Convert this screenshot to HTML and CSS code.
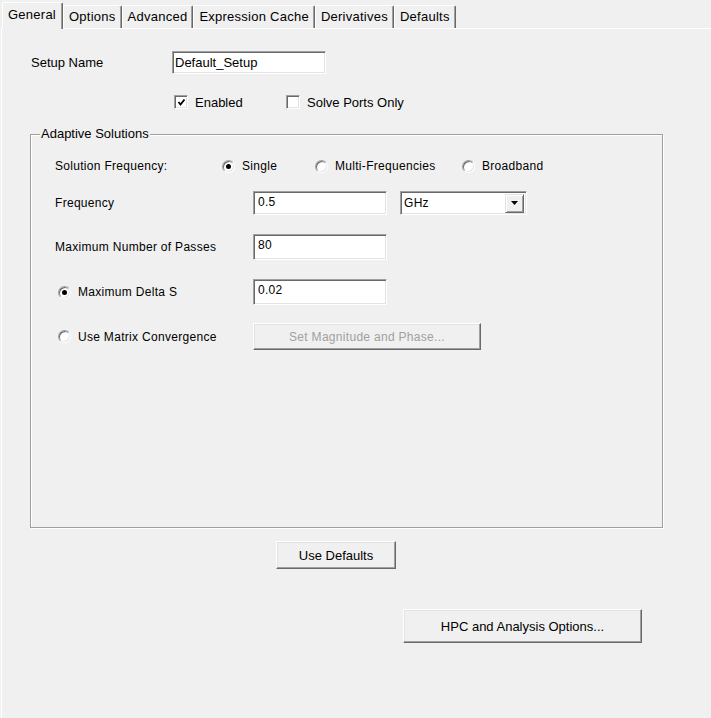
FILE: index.html
```html
<!DOCTYPE html>
<html lang="en">
<head>
    <meta charset="UTF-8">
    <title>Setup</title>
    <link rel="stylesheet" href="styles.css">
</head>
<body>
<div class="dialog">
    <div class="tabs">
        <div class="tab active">General</div>
        <div class="tab">Options</div>
        <div class="tab">Advanced</div>
        <div class="tab">Expression Cache</div>
        <div class="tab">Derivatives</div>
        <div class="tab">Defaults</div>
    </div>

    <div class="panel">
        <div class="setup-row">
            <span class="setup-label">Setup Name</span>
            <div class="field setup-field">Default_Setup</div>
        </div>

        <div class="check-row">
            <label class="check-item enabled-item">
                <span class="checkbox checked">
                    <svg width="9" height="9" viewBox="0 0 9 9"><polyline points="1.5,4 3.5,6.5 7.5,1.5" fill="none" stroke="#000" stroke-width="1.8"/></svg>
                </span>
                Enabled
            </label>
            <label class="check-item">
                <span class="checkbox"></span>
                Solve Ports Only
            </label>
        </div>

        <fieldset class="group">
            <legend>Adaptive Solutions</legend>
            <div class="group-body">
                <div class="opt-row">
                    <span class="opt-label freq-label">Solution Frequency:</span>
                    <label class="radio-item single"><span class="radio on"></span>Single</label>
                    <label class="radio-item multi"><span class="radio"></span>Multi-Frequencies</label>
                    <label class="radio-item"><span class="radio"></span>Broadband</label>
                </div>

                <div class="opt-row freq">
                    <span class="opt-label">Frequency</span>
                    <div class="field small-field">0.5</div>
                    <div class="combo">
                        <span class="combo-text">GHz</span>
                        <span class="combo-btn">
                            <svg width="7" height="4" viewBox="0 0 7 4"><polygon points="0,0 7,0 3.5,4" fill="#000"/></svg>
                        </span>
                    </div>
                </div>

                <div class="opt-row tall">
                    <span class="opt-label">Maximum Number of Passes</span>
                    <div class="field small-field">80</div>
                </div>

                <div class="opt-row tall">
                    <label class="opt-label radio-label"><span class="radio on"></span>Maximum Delta S</label>
                    <div class="field small-field">0.02</div>
                </div>

                <div class="opt-row tall last">
                    <label class="opt-label radio-label"><span class="radio"></span>Use Matrix Convergence</label>
                    <button class="button magnitude-button" disabled>Set Magnitude and Phase...</button>
                </div>
            </div>
        </fieldset>

        <div class="defaults-row">
            <button class="button defaults-button">Use Defaults</button>
        </div>

        <div class="hpc-row">
            <button class="button hpc-button">HPC and Analysis Options...</button>
        </div>
    </div>
</div>
</body>
</html>
```

FILE: styles.css
```css
html, body {
    width: 100%;
    height: 100%;
    padding: 0;
    margin: 0;
    overflow: hidden;
    background: #f0f0f0;
    font-family: "Liberation Sans", Arial, sans-serif;
    font-size: 13px;
    color: #000;
}

.dialog {
    height: 100%;
}

/* tab strip */
.tabs {
    display: flex;
    align-items: flex-end;
    height: 28px;
    padding-left: 2px;
}

.tab {
    box-sizing: border-box;
    height: 23px;
    line-height: 22px;
    padding: 0 5px 0 5px;
    border-top: 1px solid #fff;
    border-left: 1px solid #fff;
    border-right: 1px solid #696969;
    border-radius: 2px 2px 0 0;
    box-shadow: inset -1px 0 #a0a0a0;
    letter-spacing: 0.25px;
    white-space: nowrap;
}

.tab.active {
    position: relative;
    z-index: 1;
    height: 27px;
    margin-bottom: -1px;
    line-height: 24px;
    padding: 0 6px 0 5px;
    background: #f0f0f0;
}

.panel {
    box-sizing: border-box;
    height: calc(100% - 28px);
    margin-left: 1px;
    border-top: 1px solid #fff;
    border-left: 1px solid #fff;
}

/* sunken controls */
.field {
    box-sizing: border-box;
    height: 23px;
    line-height: 19px;
    padding: 1px 3px;
    background: #fff;
    border: 1px solid;
    border-color: #a0a0a0 #fff #fff #a0a0a0;
    box-shadow: inset 1px 1px #696969, inset -1px -1px #e3e3e3;
    white-space: nowrap;
}

.setup-row {
    display: flex;
    align-items: center;
    margin-top: 22px;
    padding-left: 29px;
}

.setup-label {
    width: 141px;
}

.setup-field {
    width: 154px;
    padding-left: 2px;
}

.check-row {
    display: flex;
    align-items: center;
    height: 20px;
    margin-top: 18px;
    padding-left: 172px;
}

.check-item {
    display: flex;
    align-items: center;
    gap: 7px;
}

.enabled-item {
    width: 112px;
}

.checkbox {
    box-sizing: border-box;
    display: flex;
    align-items: center;
    justify-content: center;
    width: 14px;
    height: 14px;
    background: #fff;
    border: 1px solid;
    border-color: #a0a0a0 #fff #fff #a0a0a0;
    box-shadow: inset 1px 1px #696969, inset -1px -1px #e3e3e3;
}

/* group box */
.group {
    margin: 15px 48px 0 28px;
    padding: 0;
    border: 1px solid #a0a0a0;
    box-shadow: 1px 1px 0 #fff, inset 1px 1px 0 #fff;
}

.group legend {
    margin-left: 9px;
    padding: 0 1px;
    background: #f0f0f0;
    line-height: 14px;
}

.group-body {
    box-sizing: border-box;
    height: 386px;
    padding: 13px 0 0 24px;
    font-size: 12px;
    letter-spacing: 0.3px;
}

.opt-row {
    display: flex;
    align-items: center;
    height: 24px;
}

.opt-row + .opt-row {
    margin-top: 19px;
}

.opt-row.freq {
    margin-top: 13px;
}

.opt-row.tall {
    height: 26px;
}

.opt-row.last {
    height: 27px;
    margin-top: 18px;
}

.opt-label {
    width: 198px;
    flex-shrink: 0;
}

.opt-label.freq-label {
    width: 167px;
}

.radio-item, .radio-label {
    display: flex;
    align-items: center;
    gap: 7px;
}

.radio-label {
    padding-left: 3px;
    box-sizing: border-box;
}

.radio-item.single {
    width: 93px;
}

.radio-item.multi {
    width: 147px;
}

.radio {
    box-sizing: border-box;
    position: relative;
    width: 13px;
    height: 13px;
    border-radius: 50%;
    background: #fff;
    border: 1px solid;
    border-color: #a0a0a0 #fff #fff #a0a0a0;
    box-shadow: inset 1px 1px #696969, inset -1px -1px #e3e3e3;
}

.radio.on::after {
    content: "";
    position: absolute;
    top: 3px;
    left: 3px;
    width: 5px;
    height: 5px;
    border-radius: 50%;
    background: #000;
}

.small-field {
    width: 134px;
    height: 100%;
    padding-left: 4px;
}

.combo {
    box-sizing: border-box;
    display: flex;
    align-items: center;
    justify-content: space-between;
    width: 127px;
    height: 24px;
    margin-left: 13px;
    padding: 1px 2px 1px 3px;
    background: #fff;
    border: 1px solid;
    border-color: #a0a0a0 #fff #fff #a0a0a0;
    box-shadow: inset 1px 1px #696969, inset -1px -1px #e3e3e3;
}

.combo-btn {
    box-sizing: border-box;
    display: flex;
    align-items: center;
    justify-content: center;
    width: 19px;
    height: 19px;
    background: #f0f0f0;
    border: 1px solid;
    border-color: #e3e3e3 #696969 #696969 #e3e3e3;
    box-shadow: inset 1px 1px #fff, inset -1px -1px #a0a0a0;
}

/* raised buttons */
.button {
    box-sizing: border-box;
    padding: 0;
    font-family: "Liberation Sans", Arial, sans-serif;
    font-size: 13px;
    color: #000;
    background: #f0f0f0;
    border: 1px solid;
    border-color: #fff #696969 #696969 #fff;
    box-shadow: inset -1px -1px #a0a0a0, inset 1px 1px #e3e3e3;
    border-radius: 0;
}

.magnitude-button {
    width: 228px;
    height: 100%;
    font-size: 12px;
    letter-spacing: 0.3px;
    color: #a0a0a0;
}

.defaults-row {
    margin-top: 13px;
    padding-left: 274px;
}

.defaults-button {
    width: 120px;
    height: 28px;
}

.hpc-row {
    margin-top: 40px;
    padding-left: 401px;
}

.hpc-button {
    width: 239px;
    height: 34px;
}
```
